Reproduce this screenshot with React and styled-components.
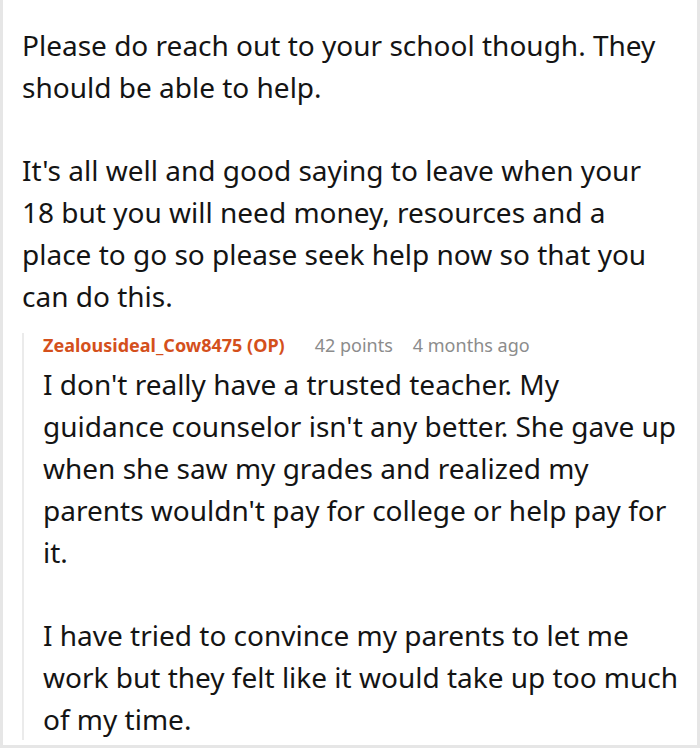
import styled, { createGlobalStyle } from 'styled-components';

const GlobalStyle = createGlobalStyle`
  html, body {
    margin: 0;
    padding: 0;
    background: #ffffff;
  }
  body {
    font-family: 'Noto Sans', 'Open Sans', sans-serif;
    color: #1a1a1b;
  }
`;

const Thread = styled.div`
  box-sizing: border-box;
  width: 700px;
  height: 748px;
  overflow: hidden;
  border: 3px solid #e6e6e6;
  border-top: none;
  padding: 24px 16px 0 19px;
`;

const Body = styled.div`
  font-size: 28px;
  line-height: 42px;
  color: #141414;
  max-width: ${({ $width }) => ($width ? `${$width}px` : 'none')};

  p {
    margin: 0 0 41px;
  }

  p:last-child {
    margin-bottom: ${({ $gap }) => $gap || 0}px;
  }
`;

const Reply = styled.div`
  border-left: 2px solid #ebebeb;
  padding-left: 19px;
`;

const Meta = styled.div`
  display: flex;
  align-items: baseline;
  gap: 20px;
  font-size: 18px;
  line-height: 24px;
  margin-bottom: 6px;
`;

const Author = styled.span`
  color: #d4501c;
  font-weight: 700;
  margin-right: 10px;
`;

const Muted = styled.span`
  color: #8c8c8c;
`;

const App = () => {
  return (
    <>
      <GlobalStyle />
      <Thread>
        <Body $gap={16} $width={640}>
          <p>Please do reach out to your school though. They should be able to help.</p>
          <p>
            It's all well and good saying to leave when your 18 but you will need money,
            resources and a place to go so please seek help now so that you can do this.
          </p>
        </Body>
        <Reply>
          <Meta>
            <Author>Zealousideal_Cow8475 (OP)</Author>
            <Muted>42 points</Muted>
            <Muted>4 months ago</Muted>
          </Meta>
          <Body>
            <p>
              I don't really have a trusted teacher. My guidance counselor isn't any better.
              She gave up when she saw my grades and realized my parents wouldn't pay for
              college or help pay for it.
            </p>
            <p>
              I have tried to convince my parents to let me work but they felt like it would
              take up too much of my time.
            </p>
          </Body>
        </Reply>
      </Thread>
    </>
  );
};

export default App;
